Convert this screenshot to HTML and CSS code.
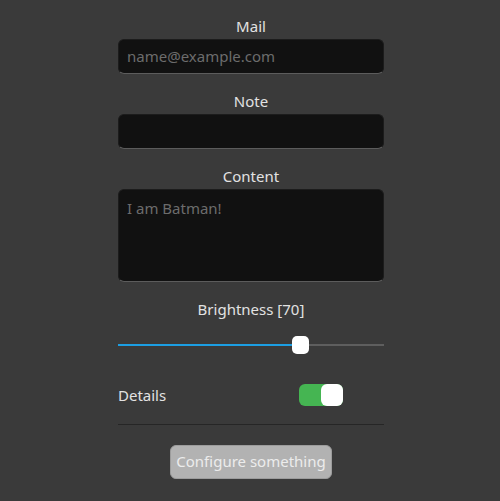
FILE: index.html
```html
<!DOCTYPE html>
<html>
<head>
<meta charset="utf-8">
<link rel="stylesheet" href="styles.css">
</head>
<body>
<div class="form">
  <div class="label">Mail</div>
  <div class="field input"><span class="placeholder">name@example.com</span></div>
  <div class="label">Note</div>
  <div class="field input"></div>
  <div class="label">Content</div>
  <div class="field textarea"><span class="placeholder">I am Batman!</span></div>
  <div class="label">Brightness [70]</div>
  <div class="slider">
    <div class="track"></div>
    <div class="fill" style="width:183px"></div>
    <div class="thumb" style="left:174px"></div>
  </div>
  <div class="row">
    <span class="row-label">Details</span>
    <div class="toggle"><div class="knob"></div></div>
  </div>
  <div class="sep"></div>
  <div class="actions"><button class="btn">Configure something</button></div>
</div>
</body>
</html>
```
FILE: styles.css
```css
html, body {
  margin: 0;
  padding: 0;
  background: #3a3a3a;
  font-family: "Noto Sans", "Open Sans", sans-serif;
  color: #e2e2e2;
}
.form {
  width: 266px;
  margin-left: 118px;
  padding-top: 15px;
  display: flex;
  flex-direction: column;
}
.label {
  text-align: center;
  font-size: 15px;
  line-height: 22px;
  height: 20px;
  margin-bottom: 4px;
}
.field {
  box-sizing: border-box;
  background: #111111;
  border: 1px solid #1c1c1c;
  border-bottom-color: #5c5c5c;
  border-radius: 6px;
  margin-bottom: 16px;
  padding: 0 8px;
  font-size: 15px;
}
.input {
  height: 35px;
  line-height: 33px;
}
.textarea {
  height: 93px;
  padding-top: 8px;
  line-height: 20px;
}
.placeholder {
  color: #6c6c6c;
}
.slider {
  position: relative;
  height: 18px;
  margin-top: 14px;
}
.track {
  position: absolute;
  left: 0;
  right: 0;
  top: 8px;
  height: 2px;
  background: #5e5e5e;
}
.fill {
  position: absolute;
  left: 0;
  top: 8px;
  height: 2px;
  background: #1c9ee3;
}
.thumb {
  position: absolute;
  top: 0;
  width: 17px;
  height: 18px;
  border-radius: 5px;
  background: #ffffff;
}
.row {
  display: flex;
  align-items: center;
  justify-content: space-between;
  margin-top: 30px;
  height: 22px;
  padding-right: 41px;
}
.row-label {
  font-size: 15px;
}
.toggle {
  position: relative;
  width: 44px;
  height: 22px;
  border-radius: 6px;
  background: #45b552;
}
.knob {
  position: absolute;
  right: 0;
  top: 0;
  width: 22px;
  height: 22px;
  border-radius: 6px;
  background: #ffffff;
}
.sep {
  height: 1px;
  background: #262626;
  margin-top: 18px;
}
.actions {
  display: flex;
  justify-content: center;
  margin-top: 20px;
}
.btn {
  box-sizing: border-box;
  width: 162px;
  height: 34px;
  border: 1px solid #9c9c9c;
  border-radius: 6px;
  background: #b2b2b2;
  color: #ececec;
  font-family: inherit;
  font-size: 15px;
  line-height: 20px;
  padding: 0 0 3px 0;
}
```
